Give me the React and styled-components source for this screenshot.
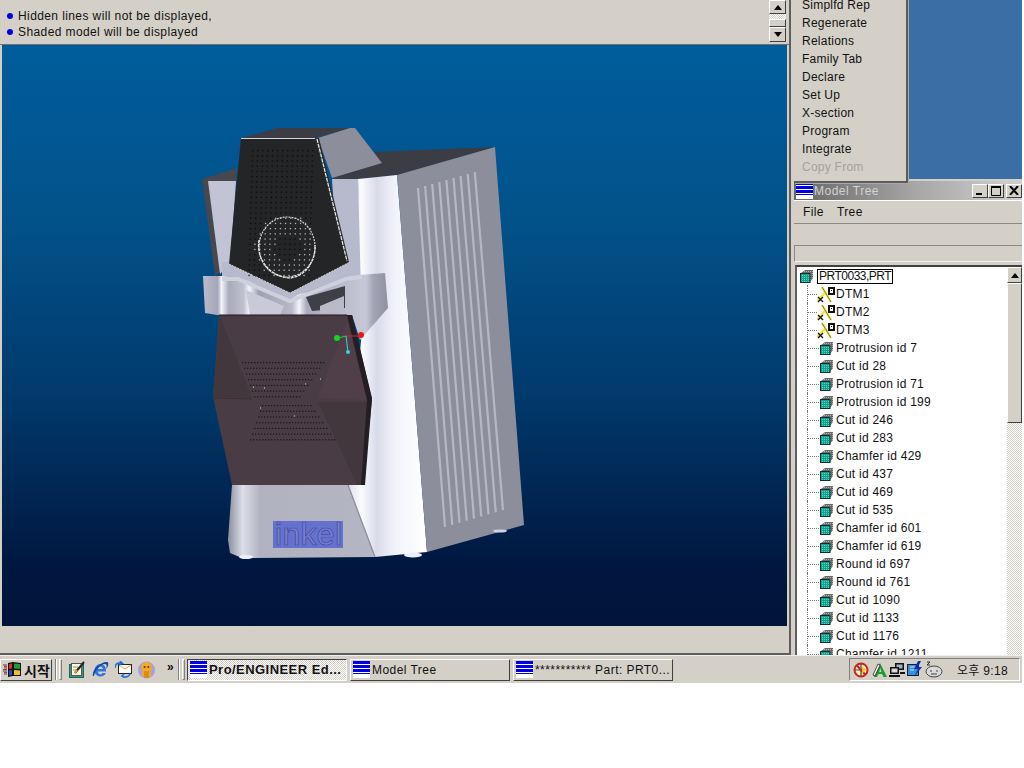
import React from "react";
import styled, { createGlobalStyle } from "styled-components";

const GlobalStyle = createGlobalStyle`
  html, body { margin: 0; padding: 0; background: #fff; }
  body { font-family: "Liberation Sans", "Noto Sans CJK KR", sans-serif; }
`;

const menuItems = [
  "Simplfd Rep", "Regenerate", "Relations", "Family Tab", "Declare",
  "Set Up", "X-section", "Program", "Integrate",
];

const treeItems = [
  "Protrusion id 7", "Cut id 28", "Protrusion id 71", "Protrusion id 199",
  "Cut id 246", "Cut id 283", "Chamfer id 429", "Cut id 437", "Cut id 469",
  "Cut id 535", "Chamfer id 601", "Chamfer id 619", "Round id 697",
  "Round id 761", "Cut id 1090", "Cut id 1133", "Cut id 1176", "Chamfer id 1211",
];

function WinIcon() {
  return (
    <svg width="17" height="17" viewBox="0 0 17 17" style={{ flex: "none" }}>
      <rect width="17" height="17" fill="#fff" />
      <rect width="17" height="3" fill="#0000e0" />
      <rect y="4" width="17" height="3" fill="#0000e0" />
      <rect y="8" width="17" height="3" fill="#0000e0" />
      <rect y="12" width="17" height="1" fill="#0000e0" />
    </svg>
  );
}

function CubeIcon() {
  return (
    <svg width="14" height="14" viewBox="0 0 14 14" style={{ flex: "none" }}>
      <defs>
        <pattern id="cubeBack" width="2" height="2" patternUnits="userSpaceOnUse">
          <rect width="2" height="2" fill="#6a6a6a" />
          <rect width="1" height="1" fill="#b4b4b4" />
        </pattern>
        <pattern id="cubeFront" width="2" height="2" patternUnits="userSpaceOnUse">
          <rect width="2" height="2" fill="#17a090" />
          <rect width="1" height="1" fill="#4fd8b8" />
        </pattern>
      </defs>
      <path d="M1 4 L5 1 H13 V9 L10 13 H1Z" fill="url(#cubeBack)" />
      <rect x="0.5" y="4.5" width="9.5" height="9" fill="url(#cubeFront)" stroke="#0b2f33" />
    </svg>
  );
}

function DatumIcon() {
  return (
    <svg width="18" height="17" viewBox="0 0 18 17" style={{ flex: "none" }}>
      <path d="M5 1 L14 16" stroke="#f5e83a" strokeWidth="2.4" />
      <path d="M0 15 L9 6" stroke="#f5e83a" strokeWidth="2.4" />
      <path d="M5 1 L14 16" stroke="#333" strokeWidth="0.6" />
      <path d="M1 11 l5 5 M6 11 l-5 5" stroke="#111" strokeWidth="1.3" />
      <rect x="11" y="1" width="7" height="8" fill="#111" />
      <rect x="13" y="3" width="3" height="4" fill="#fff" />
      <rect x="14" y="4" width="1" height="1" fill="#111" />
    </svg>
  );
}

function ScrollArrow({ dir }) {
  return (
    <svg width="8" height="5" viewBox="0 0 8 5">
      <path d={dir === "up" ? "M4 0 L8 5 H0Z" : "M4 5 L8 0 H0Z"} fill="#000" />
    </svg>
  );
}

function Model() {
  const dots = [];
  const cx = 287;
  const cy = 247;
  for (let r = 0; r < 27; r++) {
    for (let c = 0; c < 13; c++) {
      const y = 150 + r * 5.2;
      const x = 252 + c * 5 - r * 0.15;
      const d = Math.hypot(x - cx, y - cy);
      const light = y > 205 && d > 13 && d < 33;
      if (y > 275 && d > 27) continue;
      dots.push(<rect key={`a${r}-${c}`} x={x} y={y} width="1.3" height="1.3" fill={light ? "#b4b4b4" : "#0c0c0c"} />);
    }
  }
  const grille = [];
  for (let r = 0; r < 7; r++) {
    const upperCount = 28 - r * 2;
    for (let c = 0; c < upperCount; c++) {
      grille.push(<rect key={`b${r}-${c}`} x={242 + c * 3 + r * 2} y={362 + r * 5.7} width="1.3" height="1.2" fill="#1c1418" />);
    }
    const lowerCount = 17 + r * 2;
    for (let c = 0; c < lowerCount; c++) {
      grille.push(<rect key={`c${r}-${c}`} x={262 + c * 3 - r * 2} y={405 + r * 5.7} width="1.3" height="1.2" fill="#1c1418" />);
    }
  }
  const slots = [];
  for (let i = 0; i < 9; i++) {
    slots.push(
      <path
        key={i}
        d={`M${418 + i * 7.1} ${188 - i * 2} L${445 + i * 7.25} ${527 - i * 2.1}`}
        stroke="#b5b7c5"
        strokeWidth="2.2"
      />
    );
  }
  return (
    <ModelSvg viewBox="2 45 785 581">
      <defs>
        <linearGradient id="white" x1="0" x2="1" y1="0" y2="0">
          <stop offset="0" stopColor="#dcdeec" />
          <stop offset="0.17" stopColor="#fbfbff" />
          <stop offset="0.36" stopColor="#d9dbe9" />
          <stop offset="0.62" stopColor="#f4f5fc" />
          <stop offset="1" stopColor="#ffffff" />
        </linearGradient>
        <linearGradient id="base" x1="0" x2="1" y1="0" y2="0">
          <stop offset="0" stopColor="#8b8d9b" />
          <stop offset="0.1" stopColor="#dcdee8" />
          <stop offset="0.22" stopColor="#b0b2c0" />
          <stop offset="1" stopColor="#b4b6c4" />
        </linearGradient>
        <linearGradient id="bracket" x1="0" x2="1" y1="0" y2="0">
          <stop offset="0" stopColor="#b9bbcc" />
          <stop offset="0.08" stopColor="#a5a7b8" />
          <stop offset="0.1" stopColor="#f4f4fb" />
          <stop offset="0.14" stopColor="#a9abbc" />
          <stop offset="0.22" stopColor="#bfc1d0" />
          <stop offset="0.25" stopColor="#f4f4fb" />
          <stop offset="0.3" stopColor="#9fa1b2" />
          <stop offset="0.48" stopColor="#b7b9c9" />
          <stop offset="0.52" stopColor="#f4f4fb" />
          <stop offset="0.56" stopColor="#a9abbc" />
          <stop offset="0.88" stopColor="#c6c8d8" />
          <stop offset="0.92" stopColor="#a3a5b6" />
          <stop offset="1" stopColor="#8f919f" />
        </linearGradient>
      </defs>

      <path d="M202 179 L237 168 L230 265 L215 276Z" fill="#47474f" />
      <path d="M208 181 H236 L230 264 L220 274Z" fill="#c2c4d6" />
      <path d="M332 179 L373 152 L495 147 L397 175 L358 179Z" fill="#3c3c44" />
      <path d="M332 179 H358 L364 300 H340Z" fill="#b7b9cc" />
      <path d="M358 179 L397 175 L427 552 L375 557 L348 485 L362 330Z" fill="url(#white)" />
      <path d="M397 175 L495 147 L524 525 L427 552Z" fill="#8c8e9b" />
      {slots}

      <path d="M222 262 H358 V300 H222Z" fill="#b7b9cc" />
      <path d="M203 276 H220 L238 277 L290 298 L346 276 L385 273 L388 308 L360 340 L352 315 H217 L205 313Z" fill="url(#bracket)" />
      <path d="M222 279 L238 279 L290 301 L346 279 L362 277" stroke="#ced0de" strokeWidth="4" fill="none" />
      <path d="M306 297 L345 286 V308 L312 311Z" fill="#3f3f47" />
      <path d="M320 306 L344 296 V311 L320 314Z" fill="#b8bac8" />
      <path d="M246 290 L284 306 L280 315 H250Z" fill="#c8cad8" />

      <path d="M241 138 L278 128 H350 L315 138Z" fill="#3c3c44" />
      <path d="M318 138 L350 128 H355 L382 163 L332 178Z" fill="#8c8e9b" />
      <path d="M241 138 H315 L348 263 L290 293 L229 264Z" fill="#242526" />
      <path d="M315 138 L319 138 L349 262 L346 263Z" fill="#2c2c2e" />
      <path d="M317 139 L347 261" stroke="#ececec" strokeWidth="1.2" strokeDasharray="4 1" />
      <path d="M241 138.5 H315" stroke="#d4d4dc" />
      <path d="M229 264 L290 293 L348 263" stroke="#d8d8de" fill="none" strokeDasharray="2 1" />
      {dots}
      <ellipse cx="287" cy="247" rx="28" ry="30" fill="none" stroke="#d0d0d0" strokeWidth="1.2" strokeDasharray="2 1" />
      <path d="M259 240 C256 262 272 277 290 278 C304 277 316 262 315 245" fill="none" stroke="#e2e2e2" strokeWidth="1.4" strokeDasharray="3 1" />

      <path d="M232 485 H348 L375 557 L242 558 L230 553 L228 540Z" fill="url(#base)" />
      <path d="M348 485 L375 557" stroke="#8d8e98" strokeWidth="1.3" />
      <ellipse cx="246" cy="557" rx="7" ry="2" fill="#eef" />
      <ellipse cx="413" cy="555" rx="9" ry="2.5" fill="#eef" />
      <ellipse cx="500" cy="531" rx="7" ry="1.6" fill="#cfd2e4" />

      <path d="M219 315 H352 L372 400 L363 485 H232 L213 397Z" fill="#4a3c44" />
      <path d="M220 316 L213 397 L252 398Z" fill="#43373e" />
      <path d="M347 320 L318 398 L367 400Z" fill="#503f48" />
      <path d="M318 402 H367 L362 485 H357Z" fill="#43373e" />
      <path d="M347 315 H352 L372 398 L365 485 H361 L367 400Z" fill="#231e24" />
      <path d="M219 315 H347" stroke="#1c181c" />
      <path d="M213 398 L252 399" stroke="#3a2f35" />
      {grille}
      <path d="M253 387h1M264 388h1M305 384h1M320 379h1M260 408h1M294 416h1" stroke="#e4e4e4" />

      <rect x="273" y="521" width="70" height="27" fill="#6571cc" />
      <InkelText x="275" y="545" textLength="67" lengthAdjust="spacing">inkel</InkelText>

      <path d="M346 336 H361" stroke="#e02020" />
      <path d="M338 338 L346 336" stroke="#20d040" />
      <path d="M346 336 L348 352" stroke="#30d8d8" />
      <circle cx="361" cy="335" r="3" fill="#e81818" />
      <circle cx="337" cy="338" r="3" fill="#18d028" />
      <circle cx="348" cy="352" r="2" fill="#30d8d8" />
    </ModelSvg>
  );
}

export default function App() {
  return (
    <Screen>
      <GlobalStyle />
      <Workspace>
        <LeftColumn>
          <MessageBar>
            <Messages>
              <Message><Bullet />Hidden lines will not be displayed,</Message>
              <Message><Bullet />Shaded model will be displayed</Message>
            </Messages>
            <MessageScroll>
              <ScrollBtn $h={14}><ScrollArrow dir="up" /></ScrollBtn>
              <ScrollTrack />
              <ScrollThumb />
              <ScrollBtn $h={15}><ScrollArrow dir="down" /></ScrollBtn>
            </MessageScroll>
          </MessageBar>
          <Viewport><Model /></Viewport>
          <StatusStrip />
        </LeftColumn>
        <Divider />
        <RightColumn>
          <TopRegion>
            <MenuPanel>
              {menuItems.map((m) => <MenuItem key={m}>{m}</MenuItem>)}
              <MenuItem $disabled>Copy From</MenuItem>
            </MenuPanel>
            <DesktopBlue />
          </TopRegion>
          <TreeWindow>
            <TitleBar>
              <WinIcon />
              <TitleText>Model Tree</TitleText>
              <TitleButtons>
                <TitleBtn>
                  <svg width="8" height="8" viewBox="0 0 8 8"><rect x="0" y="6" width="6" height="2" fill="#000" /></svg>
                </TitleBtn>
                <TitleBtn>
                  <svg width="10" height="10" viewBox="0 0 10 10"><path d="M.5 1.5H9.5V9.5H.5Z" fill="none" stroke="#000" /><rect width="10" height="2" fill="#000" /></svg>
                </TitleBtn>
                <TitleBtn $close>
                  <svg width="10" height="9" viewBox="0 0 10 9"><path d="M1 0 L9 9 M9 0 L1 9" stroke="#000" strokeWidth="2" /></svg>
                </TitleBtn>
              </TitleButtons>
            </TitleBar>
            <MenuBar><span>File</span><span>Tree</span></MenuBar>
            <ToolRow />
            <InputRow />
            <TreeBox>
              <TreeList>
                <RootRow><CubeIcon /><RootLabel>PRT0033,PRT</RootLabel></RootRow>
                {["DTM1", "DTM2", "DTM3"].map((d) => (
                  <TreeRow key={d}><Dots $w={10} /><DatumIcon /><DatumLabel>{d}</DatumLabel></TreeRow>
                ))}
                {treeItems.map((t) => (
                  <TreeRow key={t}><Dots $w={13} /><CubeIcon /><Label>{t}</Label></TreeRow>
                ))}
              </TreeList>
              <TreeScroll>
                <ScrollBtn $h={16}><ScrollArrow dir="up" /></ScrollBtn>
                <TreeThumb />
                <TreeHatch />
              </TreeScroll>
            </TreeBox>
          </TreeWindow>
        </RightColumn>
      </Workspace>
      <Taskbar>
        <StartBtn>
          <svg width="19" height="17" viewBox="0 0 19 17">
            <path d="M5 2 L10 1 L10 15 L5 16Z" fill="#111" />
            <path d="M10 1 L18 2 V15 L10 15Z" fill="#111" />
            <path d="M6 3 L9 2.5 V7.5 L6 8Z" fill="#d83020" />
            <path d="M11 2.5 L17 3 V8 L11 7.5Z" fill="#1f9a2c" />
            <path d="M6 9.5 L9 9 V14 L6 14.5Z" fill="#2848d0" />
            <path d="M11 9 L17 9.5 V14 L11 14Z" fill="#f0c020" />
            <path d="M0 4h4M1 7h3M0 10h4M1 13h3" stroke="#444" />
            <path d="M1 5.5h3M0 8.5h4M1 11.5h3" stroke="#d83020" />
          </svg>
          시작
        </StartBtn>
        <Etch />
        <Grip />
        <QuickIcons>
          <svg width="17" height="17" viewBox="0 0 17 17">
            <rect x="0.5" y="3.5" width="14" height="13" fill="#2f9aa0" stroke="#264" />
            <rect x="2.5" y="2.5" width="10" height="12" fill="#fffce0" stroke="#555" />
            <path d="M4 6h5M4 9h3" stroke="#888" />
            <path d="M6 12 L15 1" stroke="#222" strokeWidth="2" />
            <path d="M6 12 L8 9" stroke="#e0a020" strokeWidth="2" />
          </svg>
          <svg width="17" height="17" viewBox="0 0 17 17">
            <path d="M14 9.5 C14 5.5 11.5 3 8.5 3 C5 3 2.5 6 2.5 9.5 C2.5 13 5 15.5 8.5 15.5 C11 15.5 13 14 13.8 12 H10.5 C10 13 9.3 13.3 8.5 13.3 C7 13.3 6 12 6 10.5 H14Z M6 8 C6.2 6.5 7.2 5.5 8.5 5.5 C9.8 5.5 10.7 6.5 10.8 8Z" fill="#2f74e0" fillRule="evenodd" />
            <path d="M1 15 C-1 9 11 -1 16 1.5 C17 4 15 7 14 8 C15 5 15 3 13 3 C9 3 3 9 2 15Z" fill="#16459f" />
          </svg>
          <svg width="17" height="17" viewBox="0 0 17 17">
            <rect x="3.5" y="3.5" width="13" height="9" fill="#fff" stroke="#223" />
            <path d="M4 4 L10 8 L16 4" stroke="#e0b020" fill="none" />
            <path d="M0 7 C0 3 3 1 7 2 L5 0 M7 2 L4 4" stroke="#1f6fd8" strokeWidth="1.6" fill="none" />
            <path d="M15 13 C14 16 10 17 7 15 L9 13 M7 15 L10 16.5" stroke="#1f6fd8" strokeWidth="1.6" fill="none" />
          </svg>
          <svg width="17" height="18" viewBox="0 0 17 18">
            <circle cx="8.5" cy="9" r="8.5" fill="#a69ee0" />
            <circle cx="8.5" cy="6.5" r="5.5" fill="#f2aa28" />
            <rect x="6" y="10" width="5" height="7" fill="#e08c10" />
            <rect x="4" y="11" width="2" height="4" fill="#f2aa28" />
            <rect x="11" y="11" width="2" height="4" fill="#f2aa28" />
            <circle cx="6.6" cy="6" r="1" fill="#6a3800" />
            <circle cx="10.4" cy="6" r="1" fill="#6a3800" />
          </svg>
          <Chevron>»</Chevron>
        </QuickIcons>
        <Etch />
        <Grip />
        <TaskButtons>
          <TaskBtn $active><WinIcon /><b>Pro/ENGINEER Ed...</b></TaskBtn>
          <TaskBtn><WinIcon />Model Tree</TaskBtn>
          <TaskBtn><WinIcon />*********** Part: PRT0...</TaskBtn>
        </TaskButtons>
        <Tray>
          <TrayIcons>
            <svg width="16" height="17" viewBox="0 0 16 17">
              <circle cx="8" cy="9" r="6.5" fill="#fff4c0" stroke="#d02020" strokeWidth="2" />
              <path d="M8 3 V15 M2 9 H8" stroke="#444" strokeWidth="1.2" />
              <path d="M4 4.5 L12 13.5" stroke="#d02020" strokeWidth="2" />
              <path d="M9 5 L13 9 L9 13Z" fill="#f0c030" />
            </svg>
            <svg width="16" height="17" viewBox="0 0 16 17">
              <path d="M9 2 L16 16 H12.5 L11 13 H7.5 L6 16 H3Z M9.2 7 L8.2 11 H10.5Z" fill="#1f9a2c" fillRule="evenodd" />
              <path d="M2 14 L7 3 L9 4 L4 15Z" fill="#fff" stroke="#222" strokeWidth="0.8" />
            </svg>
            <svg width="16" height="17" viewBox="0 0 16 17">
              <rect x="6" y="2" width="9" height="7" fill="#111" />
              <rect x="7.5" y="3.5" width="6" height="4" fill="#9fb4c8" />
              <rect x="1" y="6" width="9" height="7" fill="#111" />
              <rect x="2.5" y="7.5" width="6" height="4" fill="#d8d8d8" />
              <path d="M0 15h11M11 12h5" stroke="#111" strokeWidth="2" />
            </svg>
            <svg width="16" height="17" viewBox="0 0 16 17">
              <rect x="0.5" y="3.5" width="11" height="11" fill="#3a8fd8" stroke="#123" />
              <path d="M3 6h6M3 9h4" stroke="#bfe4ff" />
              <path d="M11 0 L7 8 H11 L7 16 L15 6 H11 L14 0Z" fill="#1030a0" />
            </svg>
            <svg width="18" height="17" viewBox="0 0 18 17">
              <ellipse cx="9" cy="10.5" rx="8" ry="5.5" fill="#d8d8d8" stroke="#444" />
              <path d="M5 10h2M11 10h2M6 13h6" stroke="#444" />
              <path d="M2 1h3L2 4h3" stroke="#333" fill="none" />
            </svg>
          </TrayIcons>
          <Clock>오후 9:18</Clock>
        </Tray>
      </Taskbar>
    </Screen>
  );
}

const raised = `
  border: 1px solid;
  border-color: #fff #404040 #404040 #fff;
  box-sizing: border-box;
`;

const hatch = `
  background: repeating-conic-gradient(#fff 0 25%, #d4d0c8 0 50%) 0 0 / 2px 2px;
`;

const Screen = styled.div`
  width: 1024px;
  height: 768px;
  background: #fff;
  overflow: hidden;
  font-size: 12px;
  color: #111;
`;

const Workspace = styled.div`
  width: 1022px;
  height: 655px;
  display: flex;
  background: #d4d0c8;
`;

const LeftColumn = styled.div`
  width: 789px;
  flex: none;
  display: flex;
  flex-direction: column;
  border-bottom: 2px solid #5f5f5f;
  box-sizing: border-box;
`;

const MessageBar = styled.div`
  height: 45px;
  flex: none;
  display: flex;
  justify-content: space-between;
  border-bottom: 1px solid #6f6f6f;
  box-sizing: border-box;
`;

const Messages = styled.div`
  padding: 8px 0 0 7px;
`;

const Message = styled.div`
  height: 16px;
  line-height: 16px;
  letter-spacing: 0.4px;
  display: flex;
  align-items: center;
  gap: 5px;
`;

const Bullet = styled.i`
  width: 6px;
  height: 6px;
  border-radius: 50%;
  background: #0000d8;
`;

const MessageScroll = styled.div`
  width: 17px;
  margin-right: 3px;
  display: flex;
  flex-direction: column;
`;

const ScrollBtn = styled.div`
  ${raised}
  height: ${(p) => p.$h}px;
  flex: none;
  display: flex;
  align-items: center;
  justify-content: center;
  background: #d4d0c8;
`;

const ScrollTrack = styled.div`
  ${hatch}
  height: 5px;
`;

const ScrollThumb = styled.div`
  ${raised}
  height: 8px;
  background: #d4d0c8;
`;

const Viewport = styled.div`
  height: 581px;
  flex: none;
  margin-left: 2px;
  width: 785px;
  background: linear-gradient(180deg, #005d9c 0%, #02528a 30%, #013a6d 60%, #00173f 90%, #00143a 100%);
`;

const ModelSvg = styled.svg`
  display: block;
  width: 785px;
  height: 581px;
`;

const InkelText = styled.text`
  font-family: "Liberation Sans", sans-serif;
  font-size: 32px;
  fill: #7480d4;
  stroke: #3f4a98;
  stroke-width: 0.7px;
`;

const StatusStrip = styled.div`
  flex: 1;
`;

const Divider = styled.div`
  width: 5px;
  flex: none;
  border-left: 2px solid #5f5f5f;
  box-sizing: border-box;
`;

const RightColumn = styled.div`
  flex: 1;
  min-width: 0;
  display: flex;
  flex-direction: column;
`;

const TopRegion = styled.div`
  height: 179px;
  display: flex;
  flex: none;
  background: #3a6ea5;
`;

const MenuPanel = styled.div`
  width: 114px;
  height: 187px;
  flex: none;
  margin-top: -4px;
  padding: 0 0 0 8px;
  background: #d4d0c8;
  border-right: 2px solid #5c5c5c;
  border-bottom: 2px solid #5c5c5c;
  box-shadow: 1px 1px 0 #aaa;
  box-sizing: border-box;
  position: relative;
  z-index: 2;
`;

const MenuItem = styled.div`
  height: 18px;
  line-height: 18px;
  letter-spacing: 0.25px;
  color: ${(p) => (p.$disabled ? "#a5a29c" : "#111")};
`;

const DesktopBlue = styled.div`
  flex: 1;
`;

const TreeWindow = styled.div`
  flex: 1;
  min-height: 0;
  display: flex;
  flex-direction: column;
  padding-top: 2px;
  background: #d4d0c8;
`;

const TitleBar = styled.div`
  height: 19px;
  flex: none;
  padding: 0 0 0 2px;
  display: flex;
  align-items: center;
  background: linear-gradient(90deg, #666 0%, #a8a8a8 55%, #d0d0d0 100%);
  box-sizing: border-box;
`;

const TitleText = styled.span`
  margin-left: 1px;
  color: #d2d2d2;
  letter-spacing: 0.5px;
`;

const TitleButtons = styled.div`
  margin-left: auto;
  display: flex;
`;

const TitleBtn = styled.div`
  ${raised}
  width: 16px;
  height: 14px;
  margin-left: ${(p) => (p.$close ? "2px" : "0")};
  display: flex;
  align-items: center;
  justify-content: center;
  background: #d4d0c8;
`;

const MenuBar = styled.div`
  height: 24px;
  flex: none;
  padding-left: 9px;
  display: flex;
  align-items: center;
  gap: 13px;
  letter-spacing: 0.4px;
  border-top: 1px solid #fff;
  border-bottom: 1px solid #8a8a8a;
  box-sizing: border-box;
`;

const ToolRow = styled.div`
  height: 21px;
  flex: none;
`;

const InputRow = styled.div`
  height: 17px;
  flex: none;
  border-top: 1px solid #8a8a8a;
  border-left: 1px solid #8a8a8a;
  border-bottom: 1px solid #f2f2f2;
  box-sizing: border-box;
`;

const TreeBox = styled.div`
  flex: 1;
  min-height: 0;
  margin: 3px 0 0 1px;
  display: flex;
  background: #fff;
  border-top: 2px solid #404040;
  border-left: 2px solid #606060;
  box-sizing: border-box;
  overflow: hidden;
`;

const TreeList = styled.div`
  flex: 1;
  min-width: 0;
  overflow: hidden;
`;

const TreeRow = styled.div`
  height: 18px;
  display: flex;
  align-items: center;
  padding-left: 10px;
  letter-spacing: 0.25px;
`;

const RootRow = styled(TreeRow)`
  padding-left: 3px;
`;

const Dots = styled.i`
  width: ${(p) => p.$w}px;
  flex: none;
  align-self: stretch;
  border-left: 1px dotted #777;
  background: repeating-linear-gradient(90deg, #777 0 1px, transparent 1px 2px) 0 50% / 100% 1px no-repeat;
  box-sizing: border-box;
`;

const Label = styled.span`
  margin-left: 2px;
  white-space: nowrap;
`;

const DatumLabel = styled.span`
  margin-left: 1px;
`;

const RootLabel = styled.span`
  margin-left: 3px;
  padding: 0 1px;
  line-height: 13px;
  letter-spacing: -0.5px;
  border: 1px solid #000;
`;

const TreeScroll = styled.div`
  width: 15px;
  flex: none;
  display: flex;
  flex-direction: column;
`;

const TreeThumb = styled.div`
  ${raised}
  height: 140px;
  flex: none;
  background: #d4d0c8;
`;

const TreeHatch = styled.div`
  ${hatch}
  flex: 1;
`;

const Taskbar = styled.div`
  width: 1022px;
  height: 28px;
  display: flex;
  align-items: center;
  background: #d4d0c8;
  border-top: 1px solid #f0eee8;
  box-sizing: border-box;
`;

const StartBtn = styled.div`
  ${raised}
  width: 52px;
  height: 22px;
  flex: none;
  display: flex;
  align-items: center;
  gap: 2px;
  padding-left: 2px;
  font-size: 14px;
  font-weight: bold;
`;

const Etch = styled.i`
  width: 2px;
  height: 21px;
  flex: none;
  margin: 0 2px 0 3px;
  border-left: 1px solid #808080;
  border-right: 1px solid #fff;
  box-sizing: border-box;
`;

const Grip = styled.i`
  width: 3px;
  height: 21px;
  flex: none;
  border: 1px solid;
  border-color: #fff #808080 #808080 #fff;
  box-sizing: border-box;
`;

const QuickIcons = styled.div`
  width: 113px;
  flex: none;
  padding-left: 7px;
  display: flex;
  align-items: center;
  gap: 6px;
  box-sizing: border-box;
`;

const Chevron = styled.span`
  margin-left: 6px;
  margin-top: -6px;
  font-weight: bold;
`;

const TaskButtons = styled.div`
  margin-left: 2px;
  display: flex;
  gap: 3px;
`;

const TaskBtn = styled.div`
  ${(p) => (p.$active ? hatch : "background: #d4d0c8;")}
  width: 160px;
  height: 22px;
  flex: none;
  display: flex;
  align-items: center;
  gap: 2px;
  padding-left: 2px;
  letter-spacing: 0.45px;
  overflow: hidden;
  white-space: nowrap;
  border: 1px solid;
  border-color: ${(p) => (p.$active ? "#404040 #fff #fff #404040" : "#fff #404040 #404040 #fff")};
  font-size: ${(p) => (p.$active ? "13px" : "12px")};
  box-sizing: border-box;
`;

const Tray = styled.div`
  width: 171px;
  height: 23px;
  flex: none;
  margin-left: auto;
  margin-right: 2px;
  display: flex;
  align-items: center;
  padding-left: 3px;
  border: 1px solid;
  border-color: #808080 #fff #fff #808080;
  box-sizing: border-box;
`;

const TrayIcons = styled.div`
  display: flex;
  align-items: center;
  gap: 2px;
`;

const Clock = styled.span`
  margin-left: 14px;
  letter-spacing: 0.3px;
  white-space: nowrap;
`;
